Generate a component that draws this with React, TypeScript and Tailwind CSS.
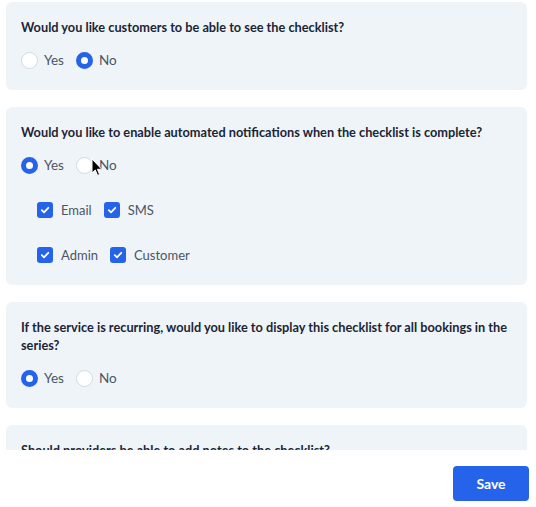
import { useState } from 'react'

type Choice = 'yes' | 'no'

function Radio({ checked, label, onClick }: { checked: boolean; label: string; onClick: () => void }) {
  return (
    <button type="button" onClick={onClick} className="flex items-center gap-[6px] h-5">
      <span
        className={
          checked
            ? 'w-[17px] h-[17px] rounded-full border-[5px] border-[#2563eb] bg-white'
            : 'w-[17px] h-[17px] rounded-full border border-[#d4d9e0] bg-white'
        }
      />
      <span className="text-[13.5px] leading-5 text-[#4a5565]">{label}</span>
    </button>
  )
}

function Checkbox({ checked, label, onClick }: { checked: boolean; label: string; onClick: () => void }) {
  return (
    <button type="button" onClick={onClick} className="flex items-center gap-[8px] h-5">
      <span
        className={
          checked
            ? 'w-[16px] h-[16px] rounded-[3px] bg-[#2563eb] flex items-center justify-center'
            : 'w-[16px] h-[16px] rounded-[3px] bg-white border border-[#d4d9e0]'
        }
      >
        {checked && (
          <svg width="10" height="10" viewBox="0 0 10 10" fill="none">
            <path d="M1.8 5.2 4 7.3 8.3 2.8" stroke="white" strokeWidth="1.8" strokeLinecap="round" strokeLinejoin="round" />
          </svg>
        )}
      </span>
      <span className="text-[13px] leading-5 text-[#4a5565]">{label}</span>
    </button>
  )
}

function YesNo({ value, onChange }: { value: Choice; onChange: (v: Choice) => void }) {
  return (
    <div className="flex items-center gap-3 mt-[14px]">
      <Radio checked={value === 'yes'} label="Yes" onClick={() => onChange('yes')} />
      <Radio checked={value === 'no'} label="No" onClick={() => onChange('no')} />
    </div>
  )
}

function Card({ title, children }: { title: string; children: React.ReactNode }) {
  return (
    <div className="rounded-md bg-[#eff4f9] px-[15px] pt-4 pb-5">
      <h3 className="text-[12.75px] leading-[18px] font-bold text-[#1b2535]">{title}</h3>
      {children}
    </div>
  )
}

export default function App() {
  const [visible, setVisible] = useState<Choice>('no')
  const [notify, setNotify] = useState<Choice>('yes')
  const [recurring, setRecurring] = useState<Choice>('yes')
  const [notes, setNotes] = useState<Choice>('no')
  const [channels, setChannels] = useState({ email: true, sms: true, admin: true, customer: true })

  const toggle = (k: keyof typeof channels) => setChannels((c) => ({ ...c, [k]: !c[k] }))

  return (
    <div className="h-[507px] flex flex-col bg-white relative" style={{ fontFamily: 'Lato, "Open Sans", sans-serif' }}>
      <div className="flex-1 overflow-hidden pl-[6px] pr-[9px] pt-[2px]">
        <div className="flex flex-col gap-[17px]">
          <Card title="Would you like customers to be able to see the checklist?">
            <YesNo value={visible} onChange={setVisible} />
          </Card>

          <Card title="Would you like to enable automated notifications when the checklist is complete?">
            <YesNo value={notify} onChange={setNotify} />
            {notify === 'yes' && (
              <div className="pl-4">
                <div className="flex items-center gap-3 mt-[25px]">
                  <Checkbox checked={channels.email} label="Email" onClick={() => toggle('email')} />
                  <Checkbox checked={channels.sms} label="SMS" onClick={() => toggle('sms')} />
                </div>
                <div className="flex items-center gap-3 mt-[25px]">
                  <Checkbox checked={channels.admin} label="Admin" onClick={() => toggle('admin')} />
                  <Checkbox checked={channels.customer} label="Customer" onClick={() => toggle('customer')} />
                </div>
              </div>
            )}
          </Card>

          <Card title="If the service is recurring, would you like to display this checklist for all bookings in the series?">
            <YesNo value={recurring} onChange={setRecurring} />
          </Card>

          <Card title="Should providers be able to add notes to the checklist?">
            <YesNo value={notes} onChange={setNotes} />
          </Card>
        </div>
      </div>

      <div className="h-[57px] flex items-start justify-end pr-[7px] pt-4">
        <button type="button" className="w-[76px] h-[35px] rounded-[4px] bg-[#2563eb] text-white text-[14px] font-bold">
          Save
        </button>
      </div>

      {/* mouse pointer */}
      <svg className="absolute left-[91px] top-[158px] pointer-events-none" width="12" height="19" viewBox="0 0 12 19">
        <path d="M1 1 L1 15 L4.3 12 L6.6 17.4 L8.6 16.5 L6.4 11.3 L10.8 11.3 Z" fill="black" stroke="white" strokeWidth="1" strokeLinejoin="round" />
      </svg>
    </div>
  )
}
